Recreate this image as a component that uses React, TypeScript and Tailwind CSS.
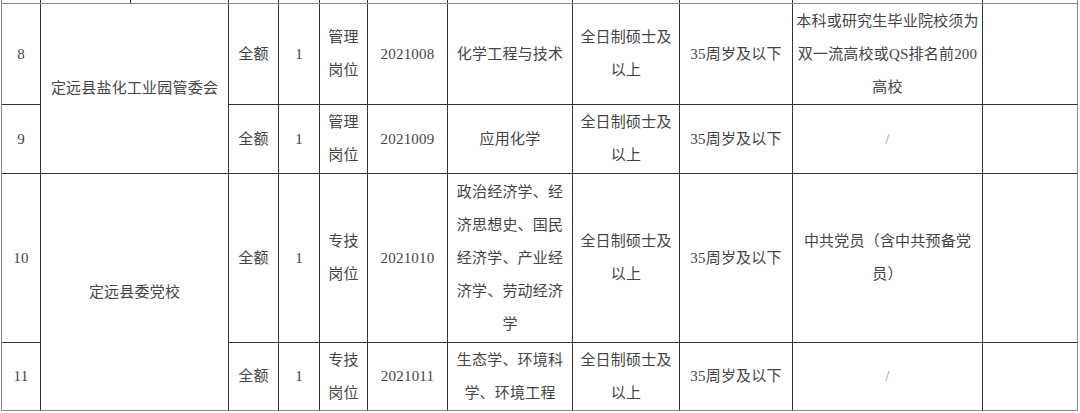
import React from 'react';

const font = { fontFamily: '"Liberation Serif", "Noto Sans CJK SC", serif' };

// line widths of the row cut off above the table
const stripWidths = ['w-[39px]', 'w-[90px]', 'w-[98px]', 'w-[50px]', 'w-[41px]', 'w-[48px]', 'w-[80px]', 'w-[125px]', 'w-[107px]', 'w-[113px]', 'w-[190px]', 'w-[95px]'];

const cell = 'border-r border-b border-[#333] px-[3px] py-0 text-center align-middle';
const last = 'border-r border-b border-r-[#888] border-b-[#333] px-[3px] py-0 text-center align-middle';

const App: React.FC = () => {
  return (
    <div className="w-[1080px] h-[413px] bg-white text-[#444] text-[15px] leading-[33px] tracking-[0.2px]" style={font}>
      <div className="ml-px h-[3px] flex border-l border-[#888]">
        {stripWidths.map((w, i) => (
          <div
            key={i}
            className={`${w} shrink-0 border-r ${i === stripWidths.length - 1 ? 'border-[#888]' : 'border-[#333]'}`}
          />
        ))}
      </div>

      <table className="ml-px table-fixed border-separate border-spacing-0 border-l border-t border-[#888] w-[1077px]">
        <colgroup>
          <col className="w-[39px]" />
          <col className="w-[188px]" />
          <col className="w-[50px]" />
          <col className="w-[41px]" />
          <col className="w-[48px]" />
          <col className="w-[80px]" />
          <col className="w-[125px]" />
          <col className="w-[107px]" />
          <col className="w-[113px]" />
          <col className="w-[190px]" />
          <col className="w-[95px]" />
        </colgroup>
        <tbody>
          <tr className="h-[101px]">
            <td className={cell}>8</td>
            <td className={cell} rowSpan={2}>定远县盐化工业园管委会</td>
            <td className={cell}>全额</td>
            <td className={cell}>1</td>
            <td className={cell}>管理岗位</td>
            <td className={cell}>2021008</td>
            <td className={cell}>化学工程与技术</td>
            <td className={cell}>全日制硕士及以上</td>
            <td className={cell}>35周岁及以下</td>
            <td className={cell}>本科或研究生毕业院校须为双一流高校或QS排名前200高校</td>
            <td className={last}></td>
          </tr>
          <tr className="h-[69px]">
            <td className={cell}>9</td>
            <td className={cell}>全额</td>
            <td className={cell}>1</td>
            <td className={cell}>管理岗位</td>
            <td className={cell}>2021009</td>
            <td className={cell}>应用化学</td>
            <td className={cell}>全日制硕士及以上</td>
            <td className={cell}>35周岁及以下</td>
            <td className={`${cell} text-[#999]`}>/</td>
            <td className={last}></td>
          </tr>
          <tr className="h-[169px]">
            <td className={cell}>10</td>
            <td className={`${cell} border-b-[#888]`} rowSpan={2}>定远县委党校</td>
            <td className={cell}>全额</td>
            <td className={cell}>1</td>
            <td className={cell}>专技岗位</td>
            <td className={cell}>2021010</td>
            <td className={cell}>政治经济学、经济思想史、国民经济学、产业经济学、劳动经济学</td>
            <td className={cell}>全日制硕士及以上</td>
            <td className={cell}>35周岁及以下</td>
            <td className={cell}>中共党员（含中共预备党员）</td>
            <td className={last}></td>
          </tr>
          <tr className="h-[68px]">
            <td className={`${cell} border-b-[#888]`}>11</td>
            <td className={`${cell} border-b-[#888]`}>全额</td>
            <td className={`${cell} border-b-[#888]`}>1</td>
            <td className={`${cell} border-b-[#888]`}>专技岗位</td>
            <td className={`${cell} border-b-[#888]`}>2021011</td>
            <td className={`${cell} border-b-[#888]`}>生态学、环境科学、环境工程</td>
            <td className={`${cell} border-b-[#888]`}>全日制硕士及以上</td>
            <td className={`${cell} border-b-[#888]`}>35周岁及以下</td>
            <td className={`${cell} border-b-[#888] text-[#999]`}>/</td>
            <td className={`${last} border-b-[#888]`}></td>
          </tr>
        </tbody>
      </table>
    </div>
  );
};

export default App;
